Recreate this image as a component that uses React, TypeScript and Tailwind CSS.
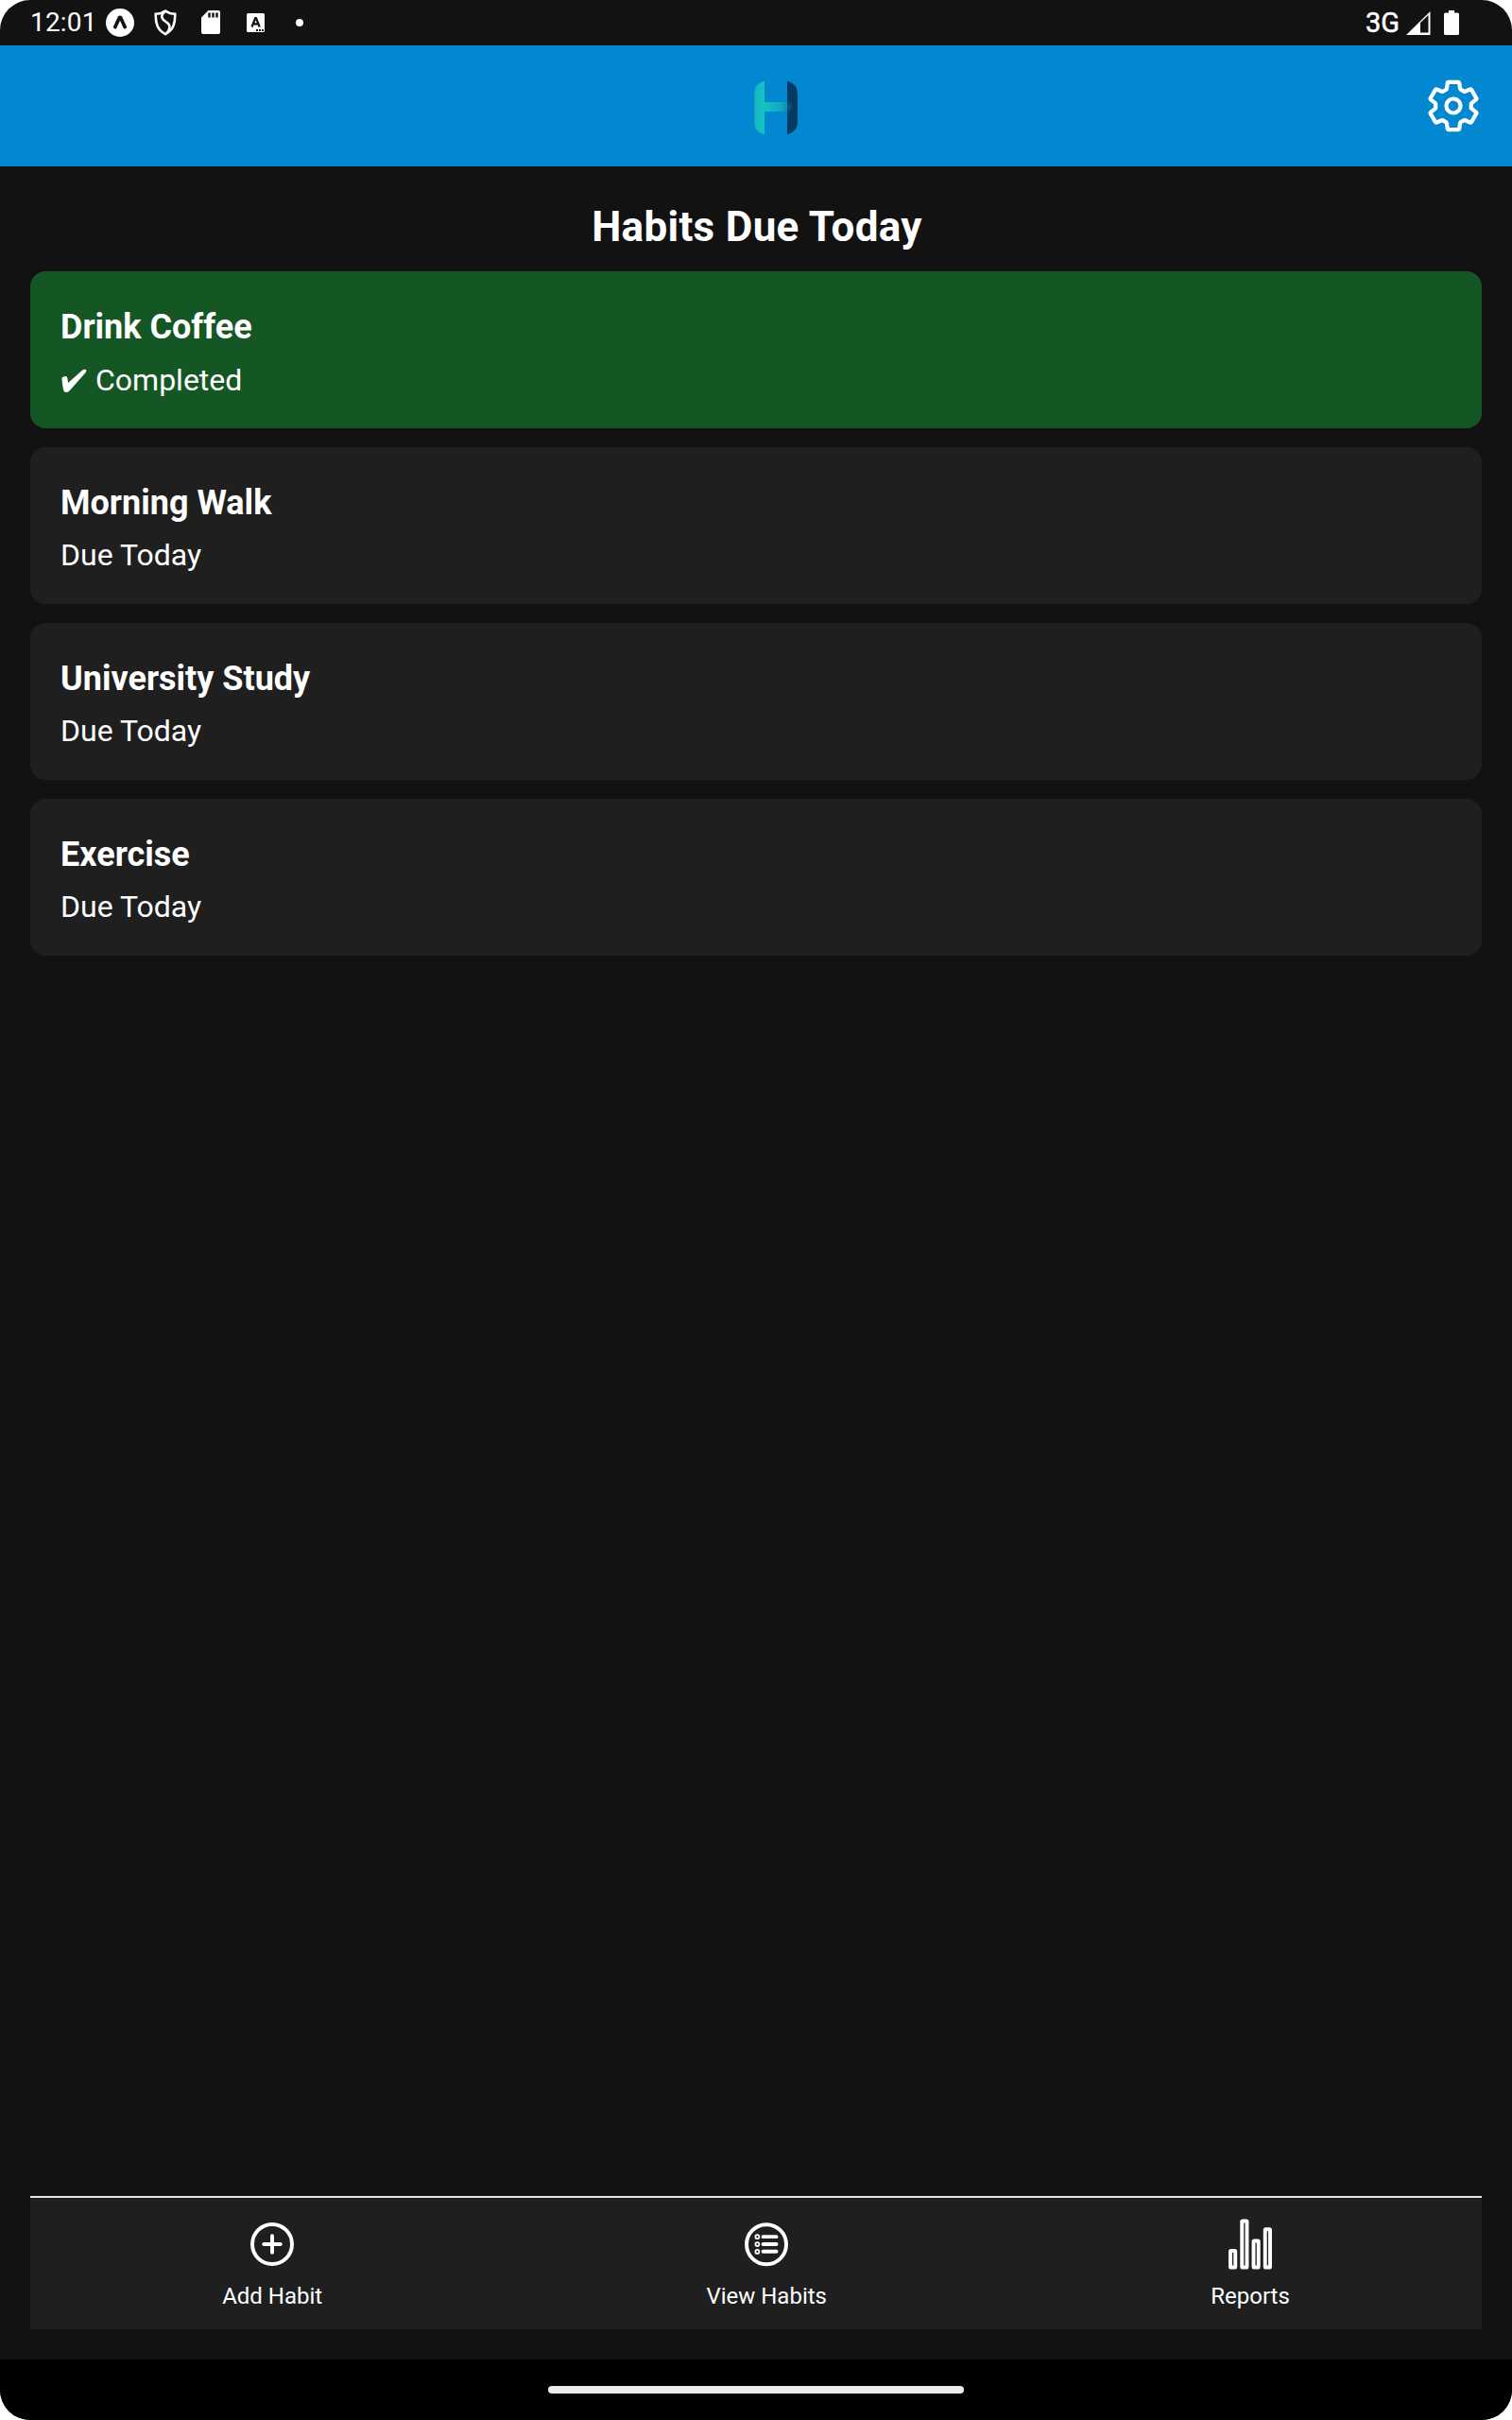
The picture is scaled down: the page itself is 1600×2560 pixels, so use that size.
import { IoSettingsOutline, IoAddCircleOutline, IoListCircleOutline, IoStatsChartOutline } from "react-icons/io5";
import type { IconType } from "react-icons";

const habits = [
  { name: "Drink Coffee", done: true },
  { name: "Morning Walk", done: false },
  { name: "University Study", done: false },
  { name: "Exercise", done: false },
];

const tabs: { label: string; Icon: IconType }[] = [
  { label: "Add Habit", Icon: IoAddCircleOutline },
  { label: "View Habits", Icon: IoListCircleOutline },
  { label: "Reports", Icon: IoStatsChartOutline },
];

function StatusBar() {
  return (
    <div className="flex h-12 shrink-0 items-center justify-between pl-8 pr-[56px]">
      <div className="flex items-center">
        <span className="w-[80px] text-[28px] leading-none tracking-[0.2px]">12:01</span>
        <svg className="h-[30px] w-[30px]" viewBox="0 0 30 30">
          <circle cx="15" cy="15" r="15" fill="#fff" />
          <path d="M13 8.200Q15 6.600 17 8.200L22.300 19.800Q21 22.500 18.900 21.200L15 12.800 11.100 21.200Q9 22.500 7.700 19.800Z" fill="#121212" />
        </svg>
        <svg className="ml-[21px] h-7 w-6" viewBox="0 0 24 28" fill="none" stroke="#fff" strokeWidth="2.6">
          <path d="M12 1.5C8.5 4 5 4.8 1.8 4.8c-.3 10 1.7 17 10.2 21.4C20.5 21.8 22.5 14.8 22.2 4.8 19 4.8 15.5 4 12 1.5Z" />
          <path d="M12 2c-4.500 3-5 6.500-1.500 9.500l4 3c3 2.500 2.500 7-1.500 11" />
        </svg>
        <svg className="ml-[26px] h-[26px] w-[20px]" viewBox="0 0 20 26">
          <path d="M7.500 0H18q2 0 2 2v21q0 2-2 2H2q-2 0-2-2V7.500Z" fill="#fff" />
          <path d="M8.500 2.500v5M12.500 2.500v5M16.500 2.500v5" stroke="#121212" strokeWidth="2.4" />
        </svg>
        <svg className="ml-[28px] h-5 w-[19px]" viewBox="0 0 19 20">
          <rect width="19" height="20" rx="1.5" fill="#fff" />
          <path d="M5.500 14.500 9.200 5h.8l3.700 9.500M6.800 11.400h5.600" fill="none" stroke="#121212" strokeWidth="2.2" />
          <path d="M10 18h2M13 18h2M16 18h2" stroke="#121212" strokeWidth="2" />
        </svg>
        <span className="ml-[33px] h-2 w-2 rounded-full bg-white" />
      </div>
      <div className="flex items-center">
        <span className="text-[29px] leading-none [-webkit-text-stroke:0.5px_white]">3G</span>
        <svg className="ml-[7px] h-[25px] w-[26px]" viewBox="0 0 26 25">
          <path d="M0 25 25.500 0v25Z" fill="#fff" />
          <path d="M15 12 23.500 4v18.500H15Z" fill="#121212" />
        </svg>
        <svg className="ml-[14px] h-[26px] w-4" viewBox="0 0 16 26">
          <path d="M5 0h6v2.500h3.500q1.500 0 1.500 1.500v20.500q0 1.500-1.500 1.500h-13Q0 26 0 24.500V4q0-1.500 1.500-1.500H5Z" fill="#fff" />
        </svg>
      </div>
    </div>
  );
}

function Logo() {
  return (
    <svg className="mt-1 h-14 w-[46px]" viewBox="0 0 46 56">
      <defs>
        <linearGradient id="stem" x1="0" x2="1">
          <stop offset="0" stopColor="#16a9c8" />
          <stop offset=".3" stopColor="#14bcc2" />
          <stop offset="1" stopColor="#16c4bd" />
        </linearGradient>
        <linearGradient id="bar" x1="0" x2="1">
          <stop offset="0" stopColor="#16c0c0" />
          <stop offset=".75" stopColor="#12a6c4" />
          <stop offset="1" stopColor="#0c8cb4" />
        </linearGradient>
        <radialGradient id="glow" cx="35" cy="27" r="7" gradientUnits="userSpaceOnUse">
          <stop offset="0" stopColor="#0a648e" />
          <stop offset="1" stopColor="#033a62" />
        </radialGradient>
      </defs>
      <path d="M11 0v56h-1Q0 53 0 43V13Q0 3 10 0Z" fill="url(#stem)" />
      <path d="M11 22h24v10H11Z" fill="url(#bar)" />
      <path d="M35 0h1q10 3 10 13v30q0 10-10 13h-1Z" fill="url(#glow)" />
    </svg>
  );
}

function Check() {
  return (
    <svg className="mb-[-3px] ml-px mr-[9px] inline-block h-[26px] w-[27px] align-baseline" viewBox="0 0 28 26" fill="currentColor">
      <path d="M.4 10Q1 8.300 5 7.900 6.800 7.900 7.300 15.200L22.500 1.500Q25-.2 27 .5 27.800 2 26.200 4.200L9 23.500Q6 26.500 3.200 25 1.500 22.500.4 10Z" />
    </svg>
  );
}

export default function App() {
  return (
    <div className="h-[2560px] w-[1600px] bg-white font-[Roboto,sans-serif] text-white">
      <div className="flex h-full flex-col overflow-hidden rounded-[32px] bg-[#121212]">
        <StatusBar />
        <header className="grid h-32 shrink-0 grid-cols-[766px_46px_1fr] items-center bg-[#0288d1] px-8">
          <span />
          <Logo />
          <IoSettingsOutline className="h-[60px] w-[60px] justify-self-end [&_*]:[stroke-width:36px]" />
        </header>
        <main className="flex flex-1 flex-col px-8 pb-8 pt-[38px]">
          <h1 className="mb-[21px] pl-0.5 text-center text-[44px] font-bold leading-[52px] tracking-[0.3px]">Habits Due Today</h1>
          <ul className="flex flex-col gap-5">
            {habits.map((h) => (
              <li
                key={h.name}
                className={`h-[166px] rounded-2xl px-8 pt-[38px] ${h.done ? "bg-[#155724]" : "bg-[#1f1f1f]"}`}
              >
                <h2 className="text-[36px] font-bold leading-[42px]">{h.name}</h2>
                <p className={`text-[32px] leading-[38px] ${h.done ? "mt-4" : "mt-[15px]"}`}>
                  {h.done ? (
                    <>
                      <Check />
                      Completed
                    </>
                  ) : (
                    "Due Today"
                  )}
                </p>
              </li>
            ))}
          </ul>
          <nav className="mt-auto flex h-[141px] justify-around border-t-2 border-[#dfe4e4] bg-[#1f1f1f] pt-[21px]">
            {tabs.map(({ label, Icon }) => (
              <div key={label} className="flex flex-col items-center">
                <Icon className="h-14 w-14 [&_*]:[stroke-width:36px]" />
                <span className="mt-[13px] text-[24px] leading-7">{label}</span>
              </div>
            ))}
          </nav>
        </main>
        <footer className="flex h-16 shrink-0 items-center justify-center bg-black">
          <span className="h-2 w-[440px] rounded-full bg-[#ebebeb]" />
        </footer>
      </div>
    </div>
  );
}
